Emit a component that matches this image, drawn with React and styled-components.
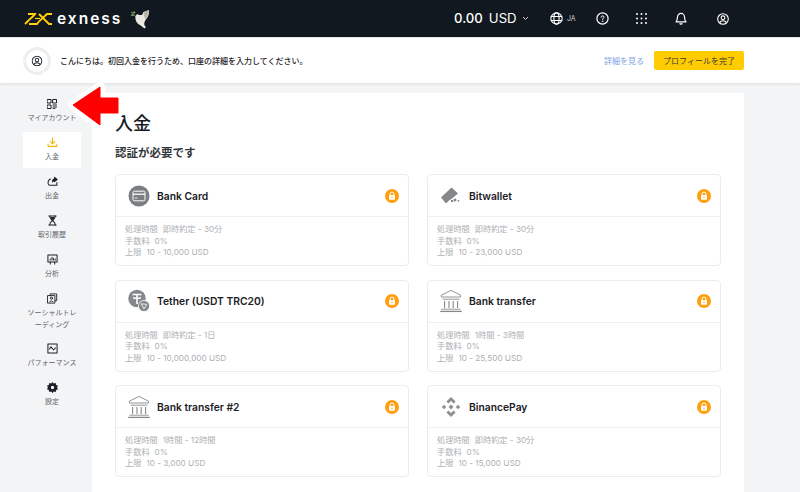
import React from "react";
import styled, { createGlobalStyle } from "styled-components";

const FONT = `Inter, "Noto Sans CJK JP", sans-serif`;

const Global = createGlobalStyle`
  html, body { margin: 0; padding: 0; background: #f3f4f6; }
  * { box-sizing: border-box; }
  body { font-family: ${FONT}; }
`;

const Page = styled.div`
  position: relative;
  width: 800px;
  height: 492px;
  overflow: hidden;
  display: flex;
  flex-direction: column;
  background: #f3f4f6;
`;

const Header = styled.header`
  height: 37px;
  flex: none;
  background: #12181f;
  color: #fff;
  display: flex;
  align-items: center;
  padding-left: 24px;
`;

const Brand = styled.div`
  display: flex;
  align-items: center;
  flex: 1;
`;

const BrandName = styled.span`
  width: 66px;
  font-size: 15.5px;
  font-weight: 600;
  letter-spacing: 2px;
  margin-left: 4px;
  margin-right: 7px;
  line-height: 1;
`;

const Balance = styled.div`
  display: flex;
  align-items: center;
  width: 96px;
  font-size: 13.2px;
  line-height: 1;
`;

const Amount = styled.span`
  font-weight: 500;
  margin-right: 6px;
`;

const Currency = styled.span`
  font-weight: 400;
  margin-right: 5px;
`;

const TopIcons = styled.div`
  display: flex;
  align-items: center;
  width: 250px;
`;

const TopIcon = styled.span`
  display: flex;
  align-items: center;
  margin-right: ${(p) => p.$gap}px;
`;

const Lang = styled.span`
  font-size: 7px;
  color: #c8cacc;
  margin-left: 4px;
`;

const Banner = styled.section`
  height: 46px;
  flex: none;
  background: #fff;
  display: flex;
  align-items: center;
  padding: 0 56px 0 23px;
  border-top: 1px solid #e4e5e7;
  box-shadow: 0 2px 2px rgba(0, 0, 0, 0.06);
  position: relative;
  z-index: 1;
`;

const BannerText = styled.p`
  flex: 1;
  margin: 0 0 0 9px;
  font-size: 8px;
  font-weight: 500;
  color: #1f2328;
`;

const DetailLink = styled.a`
  font-size: 8px;
  color: #7c9fe6;
  margin-right: 10px;
`;

const CompleteButton = styled.button`
  width: 90px;
  height: 19px;
  border: 0;
  border-radius: 2px;
  background: #ffcc00;
  color: #3a3a32;
  font-family: ${FONT};
  font-size: 8px;
  padding: 0;
`;

const Body = styled.div`
  flex: 1;
  display: flex;
  min-height: 0;
`;

const Sidebar = styled.nav`
  width: 92px;
  flex: none;
  padding: 10px 0 0 23px;
  display: flex;
  flex-direction: column;
  gap: 3px;
`;

const NavItem = styled.a`
  width: 58px;
  min-height: 36px;
  display: flex;
  flex-direction: column;
  align-items: center;
  gap: 3px;
  padding: 5px 0 4px;
  border-radius: 2px;
  background: ${(p) => (p.$active ? "#fff" : "transparent")};
  font-size: 7px;
  line-height: 12px;
  color: #5f6368;
  text-align: center;
`;

const NavIcon = styled.span`
  height: 11px;
  display: flex;
  align-items: center;
`;

const NavLabel = styled.span`
  display: block;
  width: 52px;
`;

const Panel = styled.main`
  width: 652px;
  flex: none;
  margin-top: 10px;
  background: #fff;
  padding: 20px 23px 0;
  border-radius: 2px 0 0 0;
`;

const Title = styled.h1`
  margin: 0;
  font-size: 18px;
  line-height: 22px;
  font-weight: 500;
  color: #15191e;
`;

const SubTitle = styled.h2`
  margin: 10px 0 13px;
  font-size: 11.5px;
  line-height: 16px;
  font-weight: 600;
  color: #33373c;
`;

const CardGrid = styled.div`
  display: grid;
  grid-template-columns: 294px 294px;
  grid-auto-rows: 92px;
  column-gap: 18px;
  row-gap: 13.5px;
`;

const Card = styled.article`
  border: 1px solid #ebecee;
  border-radius: 4px;
  display: flex;
  flex-direction: column;
`;

const CardHead = styled.div`
  height: 42px;
  flex: none;
  display: flex;
  align-items: center;
  padding: 0 9px 0 11px;
  border-bottom: 1px solid #f0f1f2;
`;

const IconSlot = styled.span`
  width: 24px;
  height: 24px;
  flex: none;
  display: flex;
  align-items: center;
  justify-content: center;
  margin-right: 6px;
`;

const CardName = styled.span`
  flex: 1;
  font-size: 10.3px;
  font-weight: 600;
  color: #1c2025;
`;

const CardInfo = styled.div`
  padding: 7px 0 0 9px;
  font-size: 8.2px;
  line-height: 11.7px;
  color: #aeb0b3;
`;

const InfoLine = styled.div`
  display: flex;
  gap: 5px;
`;

const Callout = styled.svg`
  position: absolute;
  left: 62px;
  top: 80px;
  z-index: 2;
`;

const Ico = ({ children, size = 12, color = "#1b2026", sw = 1.2, vb = 12 }) => (
  <svg width={size} height={size} viewBox={`0 0 ${vb} ${vb}`} fill="none" stroke={color} strokeWidth={sw} strokeLinecap="round" strokeLinejoin="round">
    {children}
  </svg>
);

const Logo = () => (
  <svg width="29" height="12" viewBox="0 0 29 12" fill="none" stroke="#ffcf0a" strokeWidth="1.9" strokeLinejoin="miter">
    <path d="M1 11 L4 8 C7 5 10 3 11 1 L4 1" />
    <path d="M5 11 L13 11 C15 8 20 4 23 1 L28 1" />
    <path d="M15 1 L20 6 L25 11 L28 11" />
    <path d="M11 5.5 L16 5.5" strokeWidth="1.2" />
  </svg>
);

const Dove = () => (
  <svg width="20" height="20" viewBox="0 0 20 20">
    <path d="M1 3 C3 4 4 6 6 8" stroke="#7d9a63" strokeWidth="1" fill="none" />
    <ellipse cx="2.4" cy="6.2" rx="1.5" ry="0.9" fill="#7d9a63" />
    <ellipse cx="4" cy="3.4" rx="1.5" ry="0.9" fill="#7d9a63" />
    <path d="M5.5 8 C5.5 5 8 4.5 9 6 L12 6 L13.5 3 L19 1 C19.5 4 18.5 8 15.5 11 C14 14 13.5 16 16 18 L14.5 19.5 L10 16 C7 15 5 11 5.5 8Z" fill="#ece9e2" />
    <path d="M14 3 L19 1 C19 4 18 7 15.5 10 C14 8 13.5 5 14 3Z" fill="#b9b5aa" />
  </svg>
);

const Globe = () => (
  <Ico size={13} color="#fff" sw={1}>
    <circle cx="6" cy="6" r="5.2" />
    <ellipse cx="6" cy="6" rx="2.4" ry="5.2" />
    <path d="M1 4.2h10M1 7.8h10" />
  </Ico>
);

const Help = () => (
  <svg width="13" height="13" viewBox="0 0 13 13" fill="none" stroke="#fff" strokeWidth="1.2" strokeLinecap="round">
    <circle cx="6.5" cy="6.5" r="5.6" />
    <path d="M5 5.2 C5 3.4 8 3.4 8 5.2 C8 6.2 6.5 6.3 6.5 7.4" strokeWidth="1" />
    <circle cx="6.5" cy="9.2" r="0.4" strokeWidth="0.6" />
  </svg>
);

const Dots = () => (
  <svg width="11" height="11" viewBox="0 0 11 11" fill="#fff">
    {[1, 5.5, 10].flatMap((y) => [1, 5.5, 10].map((x) => <circle key={`${x}-${y}`} cx={x} cy={y} r="1" />))}
  </svg>
);

const Bell = () => (
  <svg width="12" height="13" viewBox="0 0 12 13" fill="none" stroke="#fff" strokeWidth="1.2" strokeLinejoin="round">
    <path d="M1 9.8 C2.2 8.6 2.4 7.4 2.4 5.4 C2.4 3.2 4 1.4 6 1.4 C8 1.4 9.6 3.2 9.6 5.4 C9.6 7.4 9.8 8.6 11 9.8 Z" />
    <path d="M4.6 11.4 C5.2 12.4 6.8 12.4 7.4 11.4" />
  </svg>
);

const UserRound = ({ size = 12, color = "#fff", sw = 1.1, x, y }) => (
  <svg x={x} y={y} width={size} height={size} viewBox="0 0 12 12" fill="none" stroke={color} strokeWidth={sw}>
    <circle cx="6" cy="6" r="5.3" />
    <circle cx="6" cy="4.8" r="1.9" />
    <path d="M2.6 9.8 C3.4 8.2 4.6 7.8 6 7.8 C7.4 7.8 8.6 8.2 9.4 9.8" />
  </svg>
);

// ring is split in three, with the small gaps on the upper half
const ProfileRing = () => (
  <svg width="28" height="28" viewBox="0 0 28 28" fill="none">
    <circle cx="14" cy="14" r="12.4" stroke="#eceded" strokeWidth="3" strokeDasharray="25 1" transform="rotate(-60 14 14)" />
    <UserRound x={8.5} y={8.5} size={11} color="#262b30" />
  </svg>
);

const AccountIcon = () => (
  <Ico size={10} vb={10} sw={1}>
    <rect x="0.5" y="0.5" width="3.5" height="3.5" />
    <rect x="6" y="0.5" width="3.5" height="3.5" />
    <rect x="0.5" y="6" width="3.5" height="3.5" />
    <path d="M6 6h3.5M6 8h3.5M6 9.7h2" />
  </Ico>
);

const DepositIcon = () => (
  <Ico size={11} color="#f5b60a" sw={1.2}>
    <path d="M6 1v6M3.6 5 6 7.4 8.4 5" />
    <path d="M1.2 8v2.2h9.6V8" />
  </Ico>
);

const WithdrawIcon = () => (
  <Ico size={11} sw={1.1}>
    <path d="M4 3.2C1.6 4 1 6 1.2 8.2c.2 1.4 1 2 2 2h7.6V7" />
    <path d="M6 6.4C6 4.4 7 3.4 8.2 3.2V1.4L11 3.8 8.2 6V4.6C7.2 4.8 6.6 5.4 6 6.4Z" fill="#1b2026" />
  </Ico>
);

const HistoryIcon = () => (
  <Ico size={11} sw={1.1}>
    <path d="M2 1h8M2 11h8" />
    <path d="M3 1c0 3 1.6 3.6 3 5 1.4-1.4 3-2 3-5M3 11c0-3 1.6-3.6 3-5 1.4 1.4 3 2 3 5" />
    <path d="M4.4 2.6h3.2l-1.6 2.2z" fill="#1b2026" />
  </Ico>
);

const AnalysisIcon = () => (
  <Ico size={11} sw={1.1}>
    <rect x="1" y="1" width="10" height="7.6" />
    <path d="M3.6 8.6V11M8.4 8.6V11" />
    <path d="M3.5 6.6V5.4M5.4 6.6V3.6M7.2 6.6V4.6M9 6.6V5.4" />
  </Ico>
);

const SocialIcon = () => (
  <Ico size={11} sw={1}>
    <path d="M3.4 2.4V1h7.2v7.4H9" />
    <rect x="1" y="2.8" width="7.6" height="8.2" />
    <circle cx="4.8" cy="5.6" r="1.2" />
    <path d="M2.8 9.6c.6-1.4 3.4-1.4 4 0" />
  </Ico>
);

const PerfIcon = () => (
  <Ico size={11} sw={1.1}>
    <rect x="1" y="1" width="10" height="10" />
    <path d="M2.6 6.6 4.4 4.2 7.2 7.6 9.4 5.2" />
  </Ico>
);

const GearIcon = () => (
  <svg width="11" height="11" viewBox="0 0 12 12">
    <path fill="#1b2026" fillRule="evenodd" d="M6 0 7.4 1.6 9.5 1.2 10 3.2 12 4.2 11 6 12 7.8 10 8.8 9.5 10.8 7.4 10.4 6 12 4.6 10.4 2.5 10.8 2 8.8 0 7.8 1 6 0 4.2 2 3.2 2.5 1.2 4.6 1.6ZM6 4.2a1.8 1.8 0 1 0 0 3.6 1.8 1.8 0 0 0 0-3.6Z" />
  </svg>
);

const Lock = () => (
  <svg width="14" height="14" viewBox="0 0 14 14">
    <circle cx="7" cy="7" r="7" fill="#ff9f0f" />
    <path d="M5 6.2V5a2 2 0 0 1 4 0v1.2" fill="none" stroke="#fff" strokeWidth="1" />
    <rect x="4" y="6" width="6" height="4.8" rx="0.8" fill="#fff" />
    <circle cx="7" cy="8.3" r="0.8" fill="#ff9f0f" />
  </svg>
);

const CardIcon = () => (
  <svg width="22" height="22" viewBox="0 0 22 22" fill="none">
    <circle cx="11" cy="11" r="10.5" fill="#7b7e82" />
    <rect x="5" y="6.2" width="12" height="9.6" rx="1.4" stroke="#fff" strokeWidth="1" />
    <path d="M5 9.2h12" stroke="#fff" strokeWidth="1.3" />
    <path d="M6.8 13h2.6" stroke="#fff" strokeWidth="0.9" />
  </svg>
);

const BitwalletIcon = () => (
  <svg width="22" height="22" viewBox="0 0 22 22" fill="#85888b">
    <path d="M1 12.5 11.5 2.5 18 8.5 12 13.5 9 15.5 6 18.5Z" />
    <circle cx="12" cy="16" r="1.2" />
    <circle cx="15" cy="15" r="1.5" />
    <circle cx="18.5" cy="15.8" r="0.9" />
    <circle cx="9.5" cy="16.8" r="0.7" fill="#fff" />
  </svg>
);

const TetherIcon = () => (
  <svg width="24" height="24" viewBox="0 0 24 24">
    <circle cx="10" cy="9.5" r="8.7" fill="#85888b" />
    <path d="M5.5 5.5h9M10 5.5V15M6 8.8c2.6 1 5.4 1 8 0" stroke="#fff" strokeWidth="1.6" fill="none" />
    <circle cx="17" cy="17" r="5.6" fill="#85888b" stroke="#fff" strokeWidth="0.8" />
    <path d="M14.2 14.8l5.6 0.6L17 20Z" fill="none" stroke="#fff" strokeWidth="0.8" />
  </svg>
);

const BankIcon = () => (
  <svg width="24" height="24" viewBox="0 0 24 24" fill="none" stroke="#85888b" strokeWidth="0.9">
    <path d="M2.4 6.2 12 1.4l9.6 4.8V8H2.4Z" />
    <path d="M3.6 10.2h16.8" />
    <path d="M5.6 12v7M10 12v7M14.2 12v7M18.6 12v7" strokeWidth="1.1" />
    <path d="M2.4 20.2h19.2" />
    <path d="M1.2 22.4h21.6" strokeWidth="1.3" />
  </svg>
);

const BinanceIcon = () => (
  <svg width="22" height="22" viewBox="0 0 22 22" fill="#8d9093">
    <path d="M11 1 15.6 5.6 13.6 7.6 11 5 8.4 7.6 6.4 5.6Z" />
    <path d="M11 21 15.6 16.4 13.6 14.4 11 17 8.4 14.4 6.4 16.4Z" />
    <path d="M4 8.8 6.2 11 4 13.2 1.8 11Z" />
    <path d="M18 8.8 20.2 11 18 13.2 15.8 11Z" />
    <path d="M11 8.6 13.4 11 11 13.4 8.6 11Z" />
  </svg>
);

const navItems = [
  { label: "マイアカウント", icon: <AccountIcon /> },
  { label: "入金", icon: <DepositIcon />, active: true },
  { label: "出金", icon: <WithdrawIcon /> },
  { label: "取引履歴", icon: <HistoryIcon /> },
  { label: "分析", icon: <AnalysisIcon /> },
  { label: "ソーシャルトレーディング", icon: <SocialIcon /> },
  { label: "パフォーマンス", icon: <PerfIcon /> },
  { label: "設定", icon: <GearIcon /> },
];

const methods = [
  { name: "Bank Card", icon: <CardIcon />, time: "即時約定 - 30分", limit: "10 - 10,000 USD" },
  { name: "Bitwallet", icon: <BitwalletIcon />, time: "即時約定 - 30分", limit: "10 - 23,000 USD" },
  { name: "Tether (USDT TRC20)", icon: <TetherIcon />, time: "即時約定 - 1日", limit: "10 - 10,000,000 USD" },
  { name: "Bank transfer", icon: <BankIcon />, time: "1時間 - 3時間", limit: "10 - 25,500 USD" },
  { name: "Bank transfer #2", icon: <BankIcon />, time: "1時間 - 12時間", limit: "10 - 3,000 USD" },
  { name: "BinancePay", icon: <BinanceIcon />, time: "即時約定 - 30分", limit: "10 - 15,000 USD" },
];

const App = () => (
  <Page>
    <Global />
    <Header>
      <Brand>
        <Logo />
        <BrandName>exness</BrandName>
        <Dove />
      </Brand>
      <Balance>
        <Amount>0.00</Amount>
        <Currency>USD</Currency>
        <svg width="7" height="5" viewBox="0 0 7 5" fill="none" stroke="#c8cacc" strokeWidth="1">
          <path d="M1 1l2.5 2.5L6 1" />
        </svg>
      </Balance>
      <TopIcons>
        <TopIcon $gap={20}><Globe /><Lang>JA</Lang></TopIcon>
        <TopIcon $gap={27}><Help /></TopIcon>
        <TopIcon $gap={28}><Dots /></TopIcon>
        <TopIcon $gap={30}><Bell /></TopIcon>
        <TopIcon $gap={0}><UserRound /></TopIcon>
      </TopIcons>
    </Header>
    <Banner>
      <ProfileRing />
      <BannerText>こんにちは。初回入金を行うため、口座の詳細を入力してください。</BannerText>
      <DetailLink>詳細を見る</DetailLink>
      <CompleteButton>プロフィールを完了</CompleteButton>
    </Banner>
    <Body>
      <Sidebar>
        {navItems.map((item) => (
          <NavItem key={item.label} $active={item.active}>
            <NavIcon>{item.icon}</NavIcon>
            <NavLabel>{item.label}</NavLabel>
          </NavItem>
        ))}
      </Sidebar>
      <Panel>
        <Title>入金</Title>
        <SubTitle>認証が必要です</SubTitle>
        <CardGrid>
          {methods.map((m) => (
            <Card key={m.name}>
              <CardHead>
                <IconSlot>{m.icon}</IconSlot>
                <CardName>{m.name}</CardName>
                <Lock />
              </CardHead>
              <CardInfo>
                <InfoLine><span>処理時間</span><span>{m.time}</span></InfoLine>
                <InfoLine><span>手数料</span><span>0%</span></InfoLine>
                <InfoLine><span>上限</span><span>{m.limit}</span></InfoLine>
              </CardInfo>
            </Card>
          ))}
        </CardGrid>
      </Panel>
    </Body>
    <Callout width="62" height="52" viewBox="0 0 62 52">
      <path d="M11 25 L38 7 V18 H56 V33 H38 V45 Z" fill="#fff" stroke="#fff" strokeWidth="10" strokeLinejoin="round" />
      <path d="M11 25 L38 7 V18 H56 V33 H38 V45 Z" fill="#ff0000" stroke="#ff0000" strokeWidth="1" strokeLinejoin="round" />
    </Callout>
  </Page>
);

export default App;
